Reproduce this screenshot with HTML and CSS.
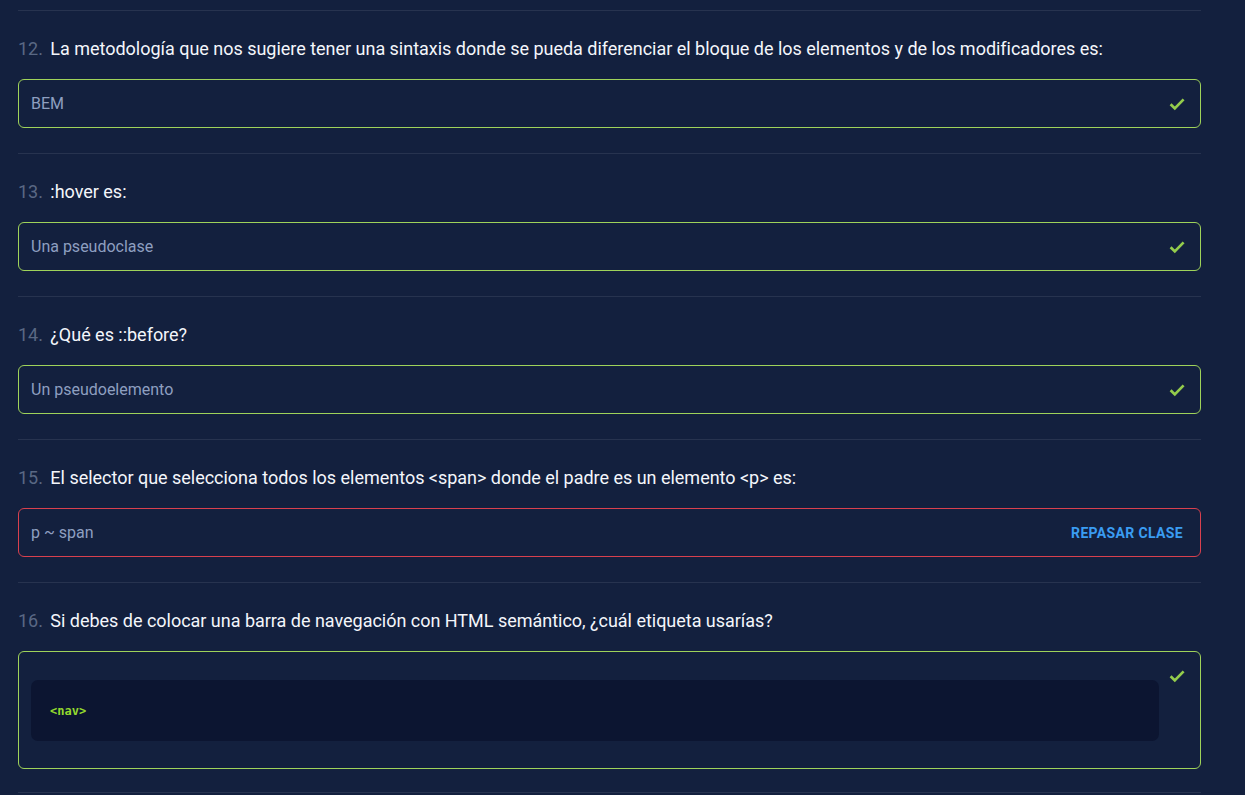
FILE: index.html
```html
<!DOCTYPE html>
<html lang="es">
<head>
<meta charset="utf-8">
<title>Resultados</title>
<link rel="stylesheet" href="styles.css">
</head>
<body>
<main class="quiz">
  <section class="item">
    <h3 class="question"><span class="num">12.</span> La metodología que nos sugiere tener una sintaxis donde se pueda diferenciar el bloque de los elementos y de los modificadores es:</h3>
    <div class="answer ok">
      <div class="answer-text">BEM</div>
      <div class="status"><svg class="check" viewBox="0 0 16 12"><path d="M1.6 6.2l4.2 4.2L14.6 1.4"/></svg></div>
    </div>
  </section>
  <section class="item">
    <h3 class="question"><span class="num">13.</span> :hover es:</h3>
    <div class="answer ok">
      <div class="answer-text">Una pseudoclase</div>
      <div class="status"><svg class="check" viewBox="0 0 16 12"><path d="M1.6 6.2l4.2 4.2L14.6 1.4"/></svg></div>
    </div>
  </section>
  <section class="item">
    <h3 class="question"><span class="num">14.</span> ¿Qué es ::before?</h3>
    <div class="answer ok">
      <div class="answer-text">Un pseudoelemento</div>
      <div class="status"><svg class="check" viewBox="0 0 16 12"><path d="M1.6 6.2l4.2 4.2L14.6 1.4"/></svg></div>
    </div>
  </section>
  <section class="item">
    <h3 class="question"><span class="num">15.</span> El selector que selecciona todos los elementos &lt;span&gt; donde el padre es un elemento &lt;p&gt; es:</h3>
    <div class="answer bad">
      <div class="answer-text">p ~ span</div>
      <div class="status"><a class="review" href="#">Repasar clase</a></div>
    </div>
  </section>
  <section class="item">
    <h3 class="question"><span class="num">16.</span> Si debes de colocar una barra de navegación con HTML semántico, ¿cuál etiqueta usarías?</h3>
    <div class="answer ok code-answer">
      <div class="answer-text"><pre class="code">&lt;nav&gt;</pre></div>
      <div class="status"><svg class="check" viewBox="0 0 16 12"><path d="M1.6 6.2l4.2 4.2L14.6 1.4"/></svg></div>
    </div>
  </section>
</main>
</body>
</html>
```

FILE: styles.css
```css
* { box-sizing: border-box; }

html, body {
  margin: 0;
  padding: 0;
  background: #13203e;
  height: 100%;
  overflow: hidden;
}

body {
  font-family: Roboto, "Liberation Sans", Arial, sans-serif;
  color: #ffffff;
}

.quiz {
  width: 1183px;
  margin: 0 0 0 18px;
  padding-top: 10px;
}

.item {
  border-top: 1px solid #27334f;
  padding: 26px 0 25px;
}

.item:last-child {
  border-bottom: 1px solid #27334f;
  padding-bottom: 23px;
}

.question {
  margin: 0 0 18px;
  font-size: 18px;
  font-weight: 400;
  line-height: 24px;
  color: #f4f6fb;
  letter-spacing: -0.02px;
}

.num {
  color: #5a6884;
  margin-right: 3px;
}

.answer {
  display: flex;
  align-items: flex-start;
  min-height: 49px;
  border: 1px solid #9fd35a;
  border-radius: 6px;
  padding: 0 15px 0 12px;
}

.answer.bad {
  border-color: #d8404e;
  padding-right: 17px;
}

.answer-text {
  flex: 1;
  min-height: 47px;
  display: flex;
  align-items: center;
  font-size: 16px;
  color: #8e9fc0;
}

.status {
  height: 47px;
  display: flex;
  align-items: center;
}

.check {
  width: 16px;
  height: 12px;
  fill: none;
  stroke: #94cc4c;
  stroke-width: 2.7;
  stroke-linecap: butt;
  overflow: visible;
}

.review {
  font-size: 14px;
  font-weight: 700;
  letter-spacing: 0.35px;
  text-transform: uppercase;
  color: #3a9cf2;
  text-decoration: none;
}

.code-answer {
  padding-top: 28px;
  padding-bottom: 27px;
}

.code-answer .status {
  margin-top: -28px;
  margin-left: 10px;
}

.code-answer .answer-text {
  min-height: 0;
  display: block;
}

.code {
  margin: 0;
  height: 61px;
  display: flex;
  align-items: center;
  padding: 0 19px;
  background: #0c1531;
  border-radius: 7px;
  font-family: "DejaVu Sans Mono", "Liberation Mono", monospace;
  font-weight: 700;
  font-size: 12px;
  color: #93d92e;
}
```
